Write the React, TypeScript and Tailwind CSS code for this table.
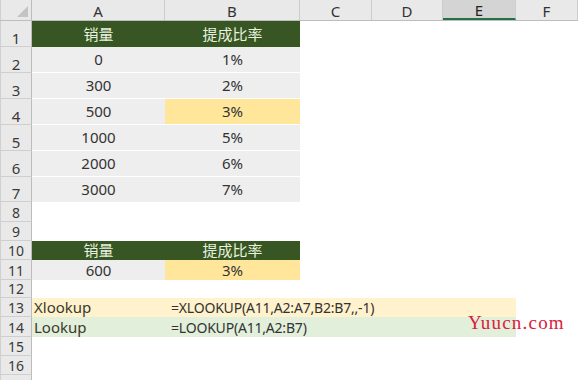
const font = { fontFamily: '"Noto Sans", "Noto Sans CJK SC", sans-serif' };

const cols = [
  { key: 'A', w: 'w-[133px]' },
  { key: 'B', w: 'w-[135px]' },
  { key: 'C', w: 'w-[72px]' },
  { key: 'D', w: 'w-[71px]' },
  { key: 'E', w: 'w-[73px]' },
  { key: 'F', w: 'flex-1' },
];

type Cell = { text?: string; bg?: string; cls?: string };
type Row = { n: number; h: string; a?: Cell; b?: Cell; band?: string; label?: string; formula?: string };

const gray = 'bg-[#eeeeee] border-b border-white';
const head = 'text-[#e8f1df] text-[15px]';

const rows: Row[] = [
  { n: 1, h: 'h-[26px]', a: { text: '销量', bg: 'bg-[#375623]', cls: head }, b: { text: '提成比率', bg: 'bg-[#375623]', cls: head } },
  { n: 2, h: 'h-[26px]', a: { text: '0', bg: gray }, b: { text: '1%', bg: gray } },
  { n: 3, h: 'h-[26px]', a: { text: '300', bg: gray }, b: { text: '2%', bg: gray } },
  { n: 4, h: 'h-[26px]', a: { text: '500', bg: gray }, b: { text: '3%', bg: 'bg-[#ffe69b] border-b border-white' } },
  { n: 5, h: 'h-[26px]', a: { text: '1000', bg: gray }, b: { text: '5%', bg: gray } },
  { n: 6, h: 'h-[26px]', a: { text: '2000', bg: gray }, b: { text: '6%', bg: gray } },
  { n: 7, h: 'h-[25px]', a: { text: '3000', bg: 'bg-[#eeeeee]' }, b: { text: '7%', bg: 'bg-[#eeeeee]' } },
  { n: 8, h: 'h-[20px]' },
  { n: 9, h: 'h-[19px]' },
  { n: 10, h: 'h-[19px]', a: { text: '销量', bg: 'bg-[#375623]', cls: head }, b: { text: '提成比率', bg: 'bg-[#375623]', cls: head } },
  { n: 11, h: 'h-[20px]', a: { text: '600', bg: 'bg-[#eeeeee]' }, b: { text: '3%', bg: 'bg-[#ffe69b]' } },
  { n: 12, h: 'h-[18px]' },
  { n: 13, h: 'h-[19px]', band: 'bg-[#fff2cc]', label: 'Xlookup', formula: '=XLOOKUP(A11,A2:A7,B2:B7,,-1)' },
  { n: 14, h: 'h-[20px]', band: 'bg-[#e2efda]', label: 'Lookup', formula: '=LOOKUP(A11,A2:B7)' },
  { n: 15, h: 'h-[19px]' },
  { n: 16, h: 'h-[19px]' },
  { n: 0, h: 'h-[19px]' },
];

const RowNum = ({ n, h }: { n: number; h: string }) => (
  <div className={`${h} w-[32px] shrink-0 bg-[#e9e9e9] border-l border-l-[#d0d0d0] border-r border-r-[#bcbcbc] border-b border-b-[#cfcfcf] flex items-end justify-center pb-[1px] leading-[14px] text-[#3a3a3a] ${n > 7 ? 'text-[14px]' : 'text-[15px]'}`}>
    {n > 0 ? n : ''}
  </div>
);

const DataCell = ({ c, w }: { c?: Cell; w: string }) => (
  <div className={`${w} h-full shrink-0 flex items-center justify-center text-[15px] text-[#333] ${c?.bg ?? ''} ${c?.cls ?? ''}`}>
    {c?.text}
  </div>
);

export default function App() {
  return (
    <div className="w-[578px] h-[380px] overflow-hidden bg-white relative" style={font}>
      {/* column header */}
      <div className="flex h-[21px] bg-[#e9e9e9] border-b border-[#bdbdbd]">
        <div className="w-[32px] shrink-0 relative border-l border-l-[#d0d0d0] border-r border-r-[#bcbcbc]">
          <div className="absolute right-[3px] bottom-[3px] w-0 h-0 border-l-[11px] border-l-transparent border-b-[11px] border-b-[#c4c4c4]" />
        </div>
        {cols.map((c) => (
          <div
            key={c.key}
            className={`${c.w} shrink-0 flex items-center justify-center text-[15px] leading-[16px] border-r border-[#cdcdcd] ${
              c.key === 'E' ? 'bg-[#d4d4d4] border-b-2 border-b-[#217346] text-[#222] pt-[2px]' : 'text-[#333] pt-[1px]'
            }`}
          >
            {c.key}
          </div>
        ))}
      </div>
      {rows.map((r) => (
        <div key={r.n} className={`flex ${r.h}`}>
          <RowNum n={r.n} h={r.h} />
          {r.band ? (
            <div className={`w-[484px] h-full flex items-center text-[15px] text-[#3a3a2c] ${r.band}`}>
              <div className="w-[139px] pl-[2px]">{r.label}</div>
              <div className="text-[14px] tracking-[-0.2px] text-[#333]">{r.formula}</div>
            </div>
          ) : (
            <>
              <DataCell c={r.a} w="w-[133px]" />
              <DataCell c={r.b} w="w-[135px]" />
            </>
          )}
        </div>
      ))}
      <div
        className="absolute left-[468px] top-[313px] text-[19px] leading-none text-[#d8203a] tracking-[1.2px]"
        style={{ fontFamily: '"Liberation Serif", serif' }}
      >
        Yuucn.com
      </div>
    </div>
  );
}
